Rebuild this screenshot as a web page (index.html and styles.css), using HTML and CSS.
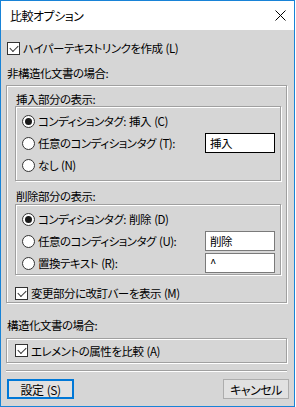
FILE: index.html
```html
<!DOCTYPE html>
<html lang="ja">
<head>
  <meta charset="UTF-8" />
  <title>比較オプション</title>
  <link rel="stylesheet" href="styles.css">
</head>
<body>
  <div class="window">
    <div class="titlebar">
      <span class="title">比較オプション</span>
      <svg class="close" width="11" height="11" viewBox="0 0 11 11">
        <path d="M0.5 0.5 L10.5 10.5 M10.5 0.5 L0.5 10.5" stroke="#000" stroke-width="1" fill="none"/>
      </svg>
    </div>

    <div class="dialog">
      <label class="check top-check">
        <span class="box checked"></span>ハイパーテキストリンクを作成 (L)
      </label>

      <div class="caption">非構造化文書の場合:</div>

      <div class="group outer">
        <div class="sub-caption">挿入部分の表示:</div>
        <div class="group inner first">
          <div class="row">
            <span class="radio on"></span>コンディションタグ: 挿入 (C)
          </div>
          <div class="row">
            <span class="radio"></span>任意のコンディションタグ (T):
            <span class="field focus">挿入</span>
          </div>
          <div class="row">
            <span class="radio"></span>なし (N)
          </div>
        </div>

        <div class="sub-caption second">削除部分の表示:</div>
        <div class="group inner">
          <div class="row">
            <span class="radio on"></span>コンディションタグ: 削除 (D)
          </div>
          <div class="row">
            <span class="radio"></span>任意のコンディションタグ (U):
            <span class="field">削除</span>
          </div>
          <div class="row">
            <span class="radio"></span>置換テキスト (R):
            <span class="field">^</span>
          </div>
        </div>

        <label class="check bar-check">
          <span class="box checked"></span>変更部分に改訂バーを表示 (M)
        </label>
      </div>

      <div class="caption structured">構造化文書の場合:</div>

      <div class="group attr">
        <label class="check">
          <span class="box checked"></span>エレメントの属性を比較 (A)
        </label>
      </div>

      <div class="separator"></div>

      <div class="buttons">
        <button class="btn default">設定 (S)</button>
        <button class="btn">キャンセル</button>
      </div>
    </div>
  </div>
</body>
</html>
```

FILE: styles.css
```css
body {
  margin: 0;
  background: #ffffff;
  font-family: "Noto Sans CJK JP", "Noto Sans", sans-serif;
  font-size: 11.5px;
  font-feature-settings: "palt";
  letter-spacing: -0.5px;
  word-spacing: 1px;
  color: #000;
}

.window {
  width: 295px;
  height: 407px;
  box-sizing: border-box;
  border: 1px solid #1883d7;
  display: flex;
  flex-direction: column;
}

.titlebar {
  height: 29px;
  background: #fff;
  display: flex;
  align-items: center;
  justify-content: space-between;
  padding: 0 8px 0 9px;
  flex-shrink: 0;
}

.title {
  font-size: 12px;
  line-height: 14px;
}

.close {
  display: block;
}

.dialog {
  flex: 1;
  background: #d6d6d6;
  padding: 0 7px 0 5px;
  display: flex;
  flex-direction: column;
}

/* checkboxes and radios */
.check {
  display: flex;
  align-items: center;
  white-space: nowrap;
}

.box {
  width: 13px;
  height: 13px;
  box-sizing: border-box;
  border: 1px solid #333;
  background: #fff;
  margin-right: 3px;
  flex-shrink: 0;
  position: relative;
}

.box.checked::after {
  content: "";
  position: absolute;
  left: 1px;
  top: 0px;
  width: 7px;
  height: 4px;
  border-left: 1px solid #333;
  border-bottom: 1px solid #333;
  transform: translate(1px, 2px) rotate(-45deg);
}

.radio {
  width: 13px;
  height: 13px;
  box-sizing: border-box;
  border: 1px solid #333;
  border-radius: 50%;
  background: #fff;
  margin-right: 3px;
  flex-shrink: 0;
  display: flex;
  align-items: center;
  justify-content: center;
}

.radio.on::after {
  content: "";
  width: 7px;
  height: 7px;
  border-radius: 50%;
  background: #1a1a1a;
}

.top-check {
  height: 20px;
  margin: 8px 0 0 1px;
}

.caption {
  height: 20px;
  line-height: 20px;
  margin-top: 5px;
  padding-left: 1px;
}

/* etched group boxes */
.group {
  border: 1px solid #a0a0a0;
  box-shadow: inset 1px 1px #fff, 1px 1px #fff;
}

.outer {
  margin-top: 2px;
  padding: 7px 5px 0 8px;
}

.sub-caption {
  height: 13px;
  line-height: 13px;
  padding-left: 1px;
}

.sub-caption.second {
  margin-top: 9px;
  margin-bottom: 1px;
}

.inner {
  padding: 3px 5px 0 6px;
}

.inner.first {
  padding-bottom: 4px;
}

.row {
  height: 22px;
  display: flex;
  align-items: center;
  white-space: nowrap;
}

.field {
  margin-left: auto;
  width: 70px;
  height: 20px;
  box-sizing: border-box;
  border: 1px solid #7a7a7a;
  background: #fff;
  padding-left: 4px;
  line-height: 18px;
}

.field.focus {
  border-color: #000;
}

.bar-check {
  height: 18px;
  margin-top: 9px;
}

.caption.structured {
  height: 13px;
  line-height: 13px;
  margin-top: 16px;
}

.attr {
  margin-top: 6px;
  height: 25px;
  box-sizing: border-box;
  padding-left: 8px;
  display: flex;
  align-items: center;
}

.separator {
  margin-top: 7px;
  border-top: 1px solid #a0a0a0;
  border-bottom: 1px solid #fff;
}

.buttons {
  margin: 7px -2px 0 1px;
  display: flex;
  justify-content: space-between;
}

.btn {
  height: 20px;
  padding: 0;
  font-family: inherit;
  font-size: 12px;
  font-feature-settings: "palt";
  letter-spacing: -0.5px;
  word-spacing: 1px;
  background: #e1e1e1;
  border: 1px solid #adadad;
  color: #000;
  width: 66px;
}

.btn.default {
  width: 67px;
  border: 2px solid #0078d7;
}
```
